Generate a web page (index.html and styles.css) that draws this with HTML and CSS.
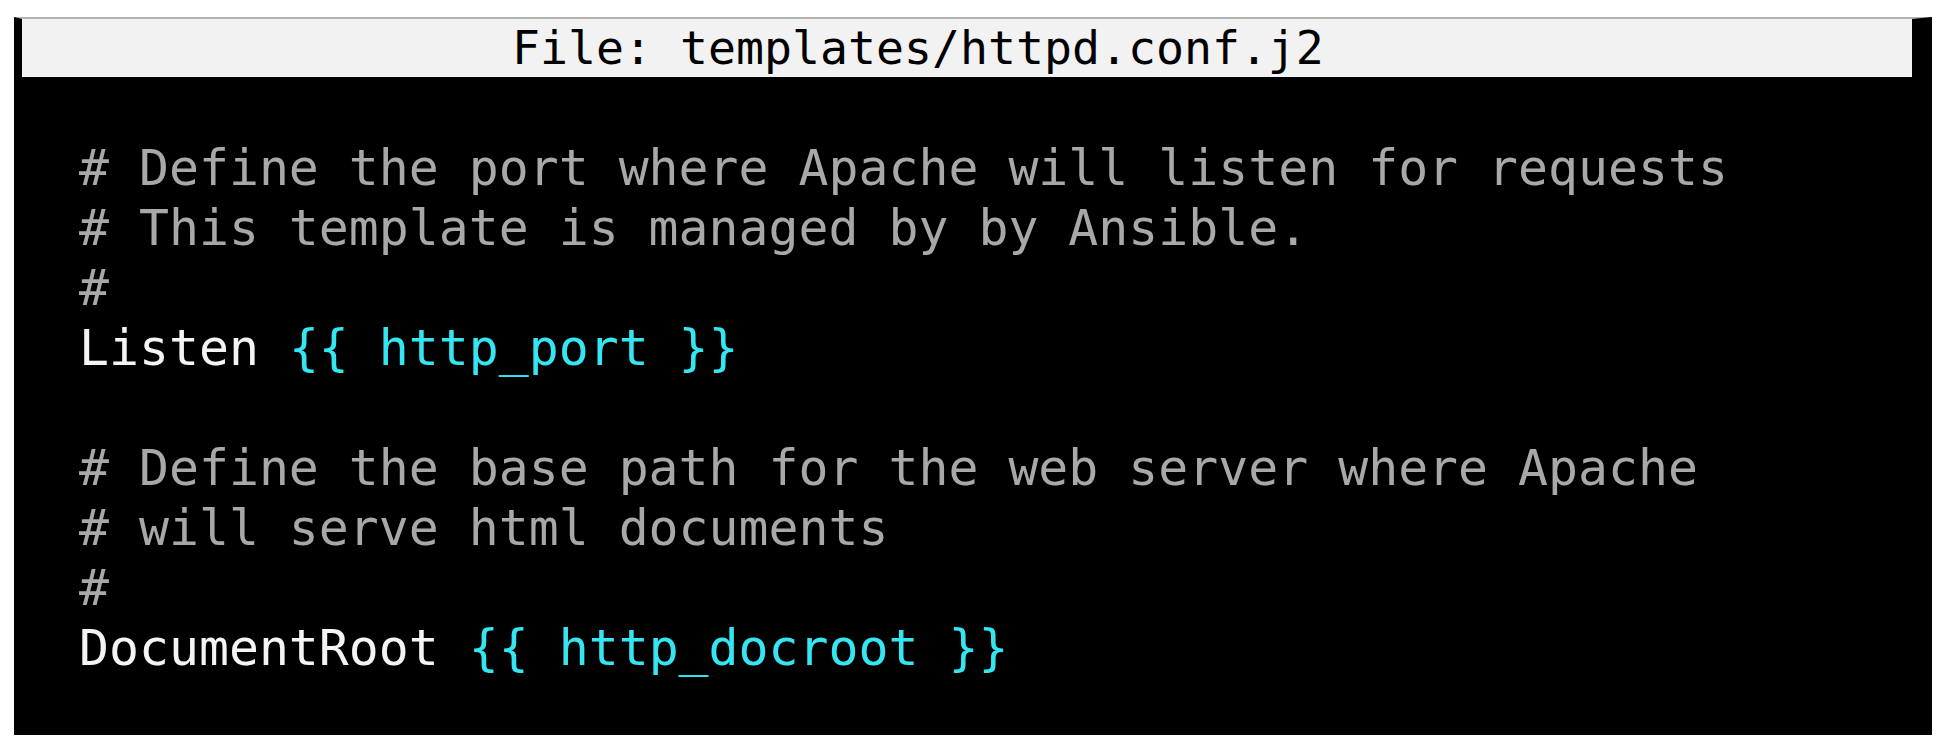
FILE: index.html
```html
<!DOCTYPE html>
<html>
<head>
<meta charset="utf-8">
<link rel="stylesheet" href="styles.css">
</head>
<body>
<div class="terminal">
  <div class="titlebar"><span class="title">File: templates/httpd.conf.j2</span></div>
  <pre class="code"><span class="comment"># Define the port where Apache will listen for requests</span>
<span class="comment"># This template is managed by by Ansible.</span>
<span class="comment">#</span>
<span class="plain">Listen </span><span class="var">{{ http_port }}</span>

<span class="comment"># Define the base path for the web server where Apache</span>
<span class="comment"># will serve html documents</span>
<span class="comment">#</span>
<span class="plain">DocumentRoot </span><span class="var">{{ http_docroot }}</span></pre>
</div>
</body>
</html>
```

FILE: styles.css
```css
html, body {
  margin: 0;
  padding: 0;
  background: #ffffff;
}

body {
  padding-top: 17px;
  padding-left: 14px;
  font-family: "DejaVu Sans Mono", "Liberation Mono", monospace;
}

.terminal {
  width: 1890px;
  height: 716px;
  background: #000000;
  border-top: 2px solid #b4b4b4;
  border-left: 8px solid #000000;
  border-right: 20px solid #000000;
  display: flex;
  flex-direction: column;
}

.titlebar {
  height: 58px;
  background: #f2f2f2;
  display: flex;
  align-items: center;
  padding-left: 490px;
}

.title {
  font-size: 46.5px;
  line-height: 58px;
  color: #000000;
  white-space: pre;
}

.code {
  margin: 0;
  padding: 61px 0 0 57px;
  font-family: "DejaVu Sans Mono", "Liberation Mono", monospace;
  font-size: 49.8px;
  line-height: 60px;
  white-space: pre;
}

.comment {
  color: #a8a8a8;
}

.plain {
  color: #f4f4f4;
}

.var {
  color: #33e6f2;
}
```
